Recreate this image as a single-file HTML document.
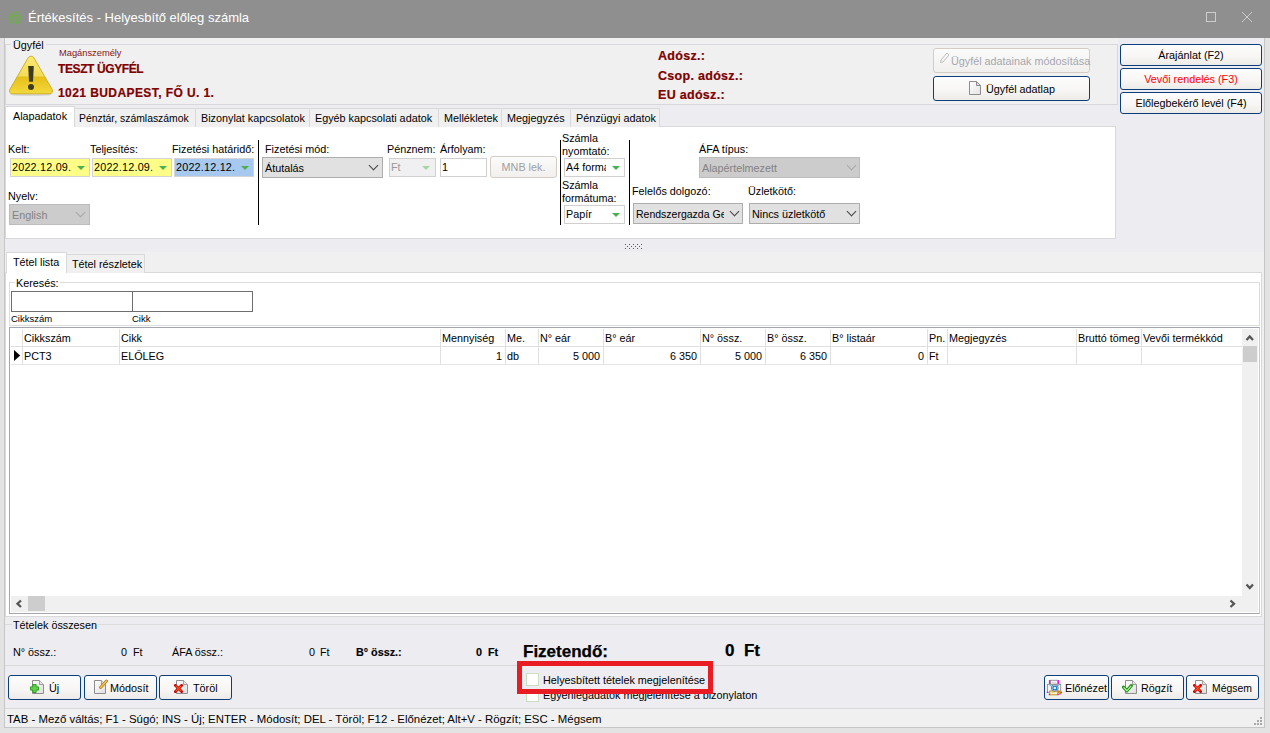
<!DOCTYPE html>
<html><head><meta charset="utf-8">
<style>
*{box-sizing:border-box;margin:0;padding:0}
html,body{width:1270px;height:733px;overflow:hidden;background:#f0f0f0;font-family:"Liberation Sans",sans-serif;font-size:10.8px;color:#000}
.a{position:absolute}
.t{position:absolute;white-space:nowrap;line-height:14px}
.btn{position:absolute;border:1px solid #0b3f7c;border-radius:3px;background:linear-gradient(#fdfdfd,#f7f6f4 60%,#ecebe8);text-align:center;white-space:nowrap}
.dbtn{position:absolute;border:1px solid #d5cdc3;border-radius:3px;background:linear-gradient(#fbfbfb,#f1f0ee);color:#a0a0a0;white-space:nowrap}
.tab{position:absolute;border:1px solid #d9d9d9;border-bottom:none;background:#f0f0f0;white-space:nowrap;line-height:17px;padding-top:1px;padding-left:5px}
.combo{position:absolute;border:1px solid #adadad;background:#e1e1e1;white-space:nowrap;line-height:18px;padding-top:1px;padding-left:2px;overflow:hidden}
.vline{position:absolute;width:1px;background:#000}
.dd{position:absolute;width:0;height:0;border-left:4px solid transparent;border-right:4px solid transparent;border-top:4px solid #4caf50}
.chev{position:absolute;width:7px;height:7px;border-right:1px solid #444;border-bottom:1px solid #444;transform:rotate(45deg)}
.hl{position:absolute;height:1px;background:#d5d5d5}
.vl{position:absolute;width:1px;background:#d5d5d5}
</style></head><body>

<!-- title bar -->
<div class="a" style="left:0;top:0;width:1270px;height:38px;background:#8f8f8f"></div>
<svg class="a" style="left:4px;top:6px" width="24" height="24" viewBox="0 0 24 24">
 <g fill="#6cb240"><circle cx="9.5" cy="6.4" r="1.1"/><circle cx="12.6" cy="6.4" r="1.1"/><circle cx="5.1" cy="13.6" r="1.1"/><circle cx="6.6" cy="16.2" r="1"/><circle cx="17" cy="13.6" r="1.1"/><circle cx="15.4" cy="16.2" r="1"/></g>
 <g fill="none" stroke="#6cb240" stroke-width="1.5" stroke-linecap="round"><path d="M6.6 8.2 Q11.1 12 15.7 8"/><path d="M4.9 10.5 Q9.5 11.5 9.5 14.5 V17.4"/><path d="M17 10.5 Q12.5 11.5 12.5 14.5 V17.4"/></g>
</svg>
<div class="t" style="left:28px;top:10px;font-size:13px;line-height:16px;color:#fff">Értékesítés - Helyesbítő előleg számla</div>
<div class="a" style="left:1206px;top:12px;width:10px;height:10px;border:1px solid #cdcdcd"></div>
<svg class="a" style="left:1241px;top:11px" width="12" height="12" viewBox="0 0 12 12"><path d="M1 1L11 11M11 1L1 11" stroke="#cdcdcd" stroke-width="1"/></svg>

<!-- window frame -->
<div class="a" style="left:0;top:38px;width:4px;height:695px;background:#e3e3e3"></div>
<div class="a" style="left:4px;top:38px;width:1px;height:690px;background:#c6c6c6"></div>
<div class="a" style="left:1265px;top:38px;width:5px;height:695px;background:#e3e3e3"></div>
<div class="a" style="left:1264px;top:38px;width:1px;height:690px;background:#c6c6c6"></div>
<div class="a" style="left:0;top:728px;width:1270px;height:5px;background:#e3e3e3"></div>
<div class="a" style="left:4px;top:727px;width:1261px;height:1px;background:#c6c6c6"></div>

<!-- header area bg -->
<div class="a" style="left:5px;top:38px;width:1259px;height:214px;background:#ececf1"></div>
<div class="a" style="left:5px;top:38px;width:1113px;height:67px;background:#f0f0f0"></div>


<!-- Ugyfel groupbox -->
<div class="a" style="left:5px;top:44px;width:1113px;height:61px;border:1px solid #d8d8dc"></div>
<div class="t" style="left:11px;top:39px;line-height:13px;padding:0 2px;background:#f0f0f0">Ügyfél</div>
<svg class="a" style="left:8px;top:54px" width="46" height="43" viewBox="0 0 46 43">
 <defs><linearGradient id="wg" x1="0" y1="0" x2="0" y2="1"><stop offset="0" stop-color="#fbe970"/><stop offset="0.52" stop-color="#f3db5c"/><stop offset="0.56" stop-color="#e6c01a"/><stop offset="1" stop-color="#f3d93c"/></linearGradient></defs>
 <ellipse cx="23" cy="40.5" rx="21" ry="1.6" fill="#000" opacity="0.10"/>
 <path d="M23 2.2 C21.4 2.2 20.4 3.2 19.4 5 L1.8 35.5 C0.8 37.4 1.8 39.8 4.6 39.8 L41.4 39.8 C44.2 39.8 45.2 37.4 44.2 35.5 L26.6 5 C25.6 3.2 24.6 2.2 23 2.2Z" fill="url(#wg)" stroke="#cdab18" stroke-width="0.9"/>
 <path d="M20.2 12 L25.8 12 L25 27.7 L21 27.7Z" fill="#3e3a1c"/>
 <circle cx="23" cy="32.9" r="3" fill="#3e3a1c"/>
</svg>
<div class="t" style="left:59px;top:46px;font-size:9.3px;color:#861414">Magánszemély</div>
<div class="t" style="left:58px;top:62px;font-size:12px;font-weight:bold;color:#800000;letter-spacing:-0.4px;-webkit-text-stroke:0.2px #800000">TESZT ÜGYFÉL</div>
<div class="t" style="left:58px;top:86px;font-size:12px;font-weight:bold;color:#800000;letter-spacing:0.42px;-webkit-text-stroke:0.2px #800000">1021 BUDAPEST, FŐ U. 1.</div>
<div class="t" style="left:658px;top:49px;font-size:12.5px;font-weight:bold;color:#800000;letter-spacing:0.3px;-webkit-text-stroke:0.2px #800000">Adósz.:</div>
<div class="t" style="left:658px;top:69px;font-size:12.5px;font-weight:bold;color:#800000;letter-spacing:0.3px;-webkit-text-stroke:0.2px #800000">Csop. adósz.:</div>
<div class="t" style="left:658px;top:88px;font-size:12.5px;font-weight:bold;color:#800000;letter-spacing:0.3px;-webkit-text-stroke:0.2px #800000">EU adósz.:</div>

<div class="dbtn" style="left:933px;top:48px;width:157px;height:25px;line-height:24px;padding-left:17px;color:#a6a6ae">Ügyfél adatainak módosítása</div>
<svg class="a" style="left:939px;top:51px" width="11" height="12" viewBox="0 0 11 12"><path d="M2 9 L8 2 L10 4 L4 11 L1.5 11.5Z" fill="none" stroke="#bdbdbd" stroke-width="1"/></svg>
<div class="btn" style="left:933px;top:76px;width:157px;height:25px;line-height:24px;padding-left:18px">Ügyfél adatlap</div>
<svg class="a" style="left:969px;top:81px" width="12" height="14" viewBox="0 0 12 14"><defs><linearGradient id="dga" x1="0" y1="0" x2="1" y2="1"><stop offset="0" stop-color="#ffffff"/><stop offset="1" stop-color="#e2e2e2"/></linearGradient></defs><path d="M0.5 0.5 H7.5 L11.5 4.5 V13.5 H0.5Z" fill="url(#dga)" stroke="#8e8a8e"/><path d="M7.5 0.5 V4.5 H11.5Z" fill="#e4e4e4" stroke="#8e8a8e" stroke-linejoin="miter"/></svg>

<div class="btn" style="left:1120px;top:44px;width:142px;height:22px;line-height:20px">Árajánlat (F2)</div>
<div class="btn" style="left:1120px;top:68px;width:142px;height:22px;line-height:20px;color:#ff0000">Vevői rendelés (F3)</div>
<div class="btn" style="left:1120px;top:92px;width:142px;height:22px;line-height:20px">Előlegbekérő levél (F4)</div>

<!-- upper tabs -->
<div class="a" style="left:5px;top:126px;width:1111px;height:113px;background:#fff;border:1px solid #d9d9d9"></div>
<div class="tab" style="left:74px;top:108px;width:122px;height:19px;font-size:10.4px;padding-left:4px">Pénztár, számlaszámok</div>
<div class="tab" style="left:195px;top:108px;width:115px;height:19px">Bizonylat kapcsolatok</div>
<div class="tab" style="left:309px;top:108px;width:130px;height:19px">Egyéb kapcsolati adatok</div>
<div class="tab" style="left:438px;top:108px;width:64px;height:19px">Mellékletek</div>
<div class="tab" style="left:501px;top:108px;width:70px;height:19px">Megjegyzés</div>
<div class="tab" style="left:570px;top:108px;width:90px;height:19px">Pénzügyi adatok</div>
<div class="tab" style="left:5px;top:106px;width:70px;height:21px;background:#fff;line-height:19px;padding-top:0;padding-left:7px">Alapadatok</div>


<!-- form -->
<div class="t" style="left:8px;top:142px">Kelt:</div>
<div class="t" style="left:90px;top:142px">Teljesítés:</div>
<div class="t" style="left:172px;top:142px">Fizetési határidő:</div>
<div class="a" style="left:10px;top:158px;width:80px;height:19px;background:#ffff88;border:1px solid #d4d4d4"></div>
<div class="t" style="left:12px;top:160px;letter-spacing:0.2px">2022.12.09.</div>
<div class="dd" style="left:77px;top:166px"></div>
<div class="a" style="left:92px;top:158px;width:80px;height:19px;background:#ffff88;border:1px solid #d4d4d4"></div>
<div class="t" style="left:94px;top:160px;letter-spacing:0.2px">2022.12.09.</div>
<div class="dd" style="left:159px;top:166px"></div>
<div class="a" style="left:174px;top:158px;width:80px;height:19px;background:#a7c9ef;border:1px solid #d4d4d4"></div>
<div class="t" style="left:176px;top:160px;letter-spacing:0.2px">2022.12.12.</div>
<div class="dd" style="left:241px;top:166px"></div>
<div class="t" style="left:8px;top:189px">Nyelv:</div>
<div class="combo" style="left:9px;top:204px;width:81px;height:21px;background:#cccccc;border-color:#bcbcbc;color:#838383">English</div>
<div class="chev" style="left:77px;top:209px;border-color:#a8a8a8"></div>
<div class="vline" style="left:258px;top:140px;height:85px"></div>

<div class="t" style="left:265px;top:142px">Fizetési mód:</div>
<div class="combo" style="left:262px;top:157px;width:121px;height:21px">Átutalás</div>
<div class="chev" style="left:370px;top:162px"></div>
<div class="t" style="left:387px;top:142px">Pénznem:</div>
<div class="a" style="left:389px;top:158px;width:47px;height:19px;background:#f0f0f0;border:1px solid #d0d0d0"></div>
<div class="t" style="left:391px;top:160px;color:#9a9a9a">Ft</div>
<div class="dd" style="left:422px;top:166px;border-top-color:#a5d6a7"></div>
<div class="t" style="left:440px;top:142px">Árfolyam:</div>
<div class="a" style="left:440px;top:158px;width:47px;height:19px;background:#fff;border:1px solid #d0d0d0"></div>
<div class="t" style="left:442px;top:160px">1</div>
<div class="dbtn" style="left:490px;top:156px;width:67px;height:22px;line-height:20px;text-align:center">MNB lek.</div>
<div class="vline" style="left:560px;top:140px;height:85px"></div>

<div class="t" style="left:562px;top:131px">Számla</div>
<div class="t" style="left:562px;top:144px">nyomtató:</div>
<div class="a" style="left:564px;top:158px;width:61px;height:19px;background:#fff;border:1px solid #d0d0d0"></div>
<div class="t" style="left:566px;top:160px;width:40px;overflow:hidden">A4 formátum</div>
<div class="dd" style="left:612px;top:166px"></div>
<div class="t" style="left:562px;top:178px">Számla</div>
<div class="t" style="left:562px;top:191px">formátuma:</div>
<div class="a" style="left:564px;top:205px;width:61px;height:19px;background:#fff;border:1px solid #d0d0d0"></div>
<div class="t" style="left:566px;top:207px">Papír</div>
<div class="dd" style="left:612px;top:213px"></div>
<div class="vline" style="left:629px;top:140px;height:85px"></div>

<div class="t" style="left:699px;top:142px">ÁFA típus:</div>
<div class="combo" style="left:699px;top:157px;width:161px;height:21px;background:#cccccc;border-color:#bcbcbc;color:#838383">Alapértelmezett</div>
<div class="chev" style="left:848px;top:162px;border-color:#a8a8a8"></div>
<div class="t" style="left:632px;top:184px">Felelős dolgozó:</div>
<div class="combo" style="left:633px;top:203px;width:110px;height:21px"><span style="display:inline-block;width:88px;overflow:hidden;vertical-align:top;font-size:10.5px">Rendszergazda Gergely</span></div>
<div class="chev" style="left:731px;top:208px"></div>
<div class="t" style="left:748px;top:184px">Üzletkötő:</div>
<div class="combo" style="left:749px;top:203px;width:111px;height:21px">Nincs üzletkötő</div>
<div class="chev" style="left:848px;top:208px"></div>

<!-- splitter dots -->
<svg class="a" style="left:625px;top:244px" width="17" height="5" viewBox="0 0 17 5"><g fill="#5a5a5a"><rect x="0" y="0" width="1" height="1"/><rect x="0" y="4" width="1" height="1"/><rect x="4" y="0" width="1" height="1"/><rect x="4" y="4" width="1" height="1"/><rect x="8" y="0" width="1" height="1"/><rect x="8" y="4" width="1" height="1"/><rect x="12" y="0" width="1" height="1"/><rect x="12" y="4" width="1" height="1"/><rect x="16" y="0" width="1" height="1"/><rect x="16" y="4" width="1" height="1"/><rect x="2" y="2" width="1" height="1"/><rect x="6" y="2" width="1" height="1"/><rect x="10" y="2" width="1" height="1"/><rect x="14" y="2" width="1" height="1"/></g></svg>


<!-- lower tabs -->
<div class="a" style="left:5px;top:272px;width:1257px;height:345px;background:#fff;border:1px solid #d9d9d9"></div>
<div class="tab" style="left:66px;top:254px;width:79px;height:19px">Tétel részletek</div>
<div class="tab" style="left:6px;top:252px;width:61px;height:21px;background:#fff;line-height:19px;padding-top:0;padding-left:6px">Tétel lista</div>

<!-- Keresés -->
<div class="a" style="left:9px;top:282px;width:1251px;height:44px;border:1px solid #dcdcdc"></div>
<div class="t" style="left:15px;top:276px;padding:0 1px;background:#fff">Keresés:</div>
<div class="a" style="left:11px;top:291px;width:122px;height:21px;border:1px solid #6e6e6e"></div>
<div class="a" style="left:132px;top:291px;width:121px;height:21px;border:1px solid #6e6e6e"></div>
<div class="t" style="left:11px;top:312px;font-size:9.5px">Cikkszám</div>
<div class="t" style="left:132px;top:312px;font-size:9.5px">Cikk</div>

<!-- grid -->
<div class="a" style="left:9px;top:327px;width:1251px;height:287px;border:1px solid #a3a6ae;border-right-color:#c8cad0"></div>


<!-- grid contents -->
<div class="hl" style="left:11px;top:346px;width:1231px;background:#dedede"></div>
<div class="hl" style="left:11px;top:364px;width:1231px;background:#e6e6e6"></div>
<div class="vl" style="left:22px;top:329px;height:36px;background:#e0e0e0"></div>
<div class="t" style="left:24px;top:331px;width:94px;overflow:hidden">Cikkszám</div>
<div class="t" style="left:24px;top:349px">PCT3</div>
<div class="vl" style="left:119px;top:329px;height:36px;background:#e0e0e0"></div>
<div class="t" style="left:121px;top:331px;width:318px;overflow:hidden">Cikk</div>
<div class="t" style="left:121px;top:349px">ELŐLEG</div>
<div class="vl" style="left:440px;top:329px;height:36px;background:#e0e0e0"></div>
<div class="t" style="left:442px;top:331px;width:62px;overflow:hidden">Mennyiség</div>
<div class="t" style="left:441px;top:349px;width:61px;text-align:right">1</div>
<div class="vl" style="left:505px;top:329px;height:36px;background:#e0e0e0"></div>
<div class="t" style="left:507px;top:331px;width:30px;overflow:hidden">Me.</div>
<div class="t" style="left:507px;top:349px">db</div>
<div class="vl" style="left:538px;top:329px;height:36px;background:#e0e0e0"></div>
<div class="t" style="left:540px;top:331px;width:62px;overflow:hidden">N° eár</div>
<div class="t" style="left:539px;top:349px;width:61px;text-align:right">5 000</div>
<div class="vl" style="left:603px;top:329px;height:36px;background:#e0e0e0"></div>
<div class="t" style="left:605px;top:331px;width:94px;overflow:hidden">B° eár</div>
<div class="t" style="left:604px;top:349px;width:93px;text-align:right">6 350</div>
<div class="vl" style="left:700px;top:329px;height:36px;background:#e0e0e0"></div>
<div class="t" style="left:702px;top:331px;width:62px;overflow:hidden">N° össz.</div>
<div class="t" style="left:701px;top:349px;width:61px;text-align:right">5 000</div>
<div class="vl" style="left:765px;top:329px;height:36px;background:#e0e0e0"></div>
<div class="t" style="left:767px;top:331px;width:62px;overflow:hidden">B° össz.</div>
<div class="t" style="left:766px;top:349px;width:61px;text-align:right">6 350</div>
<div class="vl" style="left:830px;top:329px;height:36px;background:#e0e0e0"></div>
<div class="t" style="left:832px;top:331px;width:94px;overflow:hidden">B° listaár</div>
<div class="t" style="left:831px;top:349px;width:93px;text-align:right">0</div>
<div class="vl" style="left:927px;top:329px;height:36px;background:#e0e0e0"></div>
<div class="t" style="left:929px;top:331px;width:17px;overflow:hidden">Pn.</div>
<div class="t" style="left:929px;top:349px">Ft</div>
<div class="vl" style="left:947px;top:329px;height:36px;background:#e0e0e0"></div>
<div class="t" style="left:949px;top:331px;width:126px;overflow:hidden">Megjegyzés</div>
<div class="vl" style="left:1076px;top:329px;height:36px;background:#e0e0e0"></div>
<div class="t" style="left:1078px;top:331px;width:62px;overflow:hidden">Bruttó tömeg</div>
<div class="vl" style="left:1141px;top:329px;height:36px;background:#e0e0e0"></div>
<div class="t" style="left:1143px;top:331px;width:98px;overflow:hidden">Vevői termékkód</div>
<svg class="a" style="left:13px;top:350px" width="8" height="12" viewBox="0 0 8 12"><path d="M1 0 L7.2 5.5 L1 11Z" fill="#000"/></svg>
<div class="a" style="left:1242px;top:329px;width:16px;height:267px;background:#f0f0f0"></div>
<div class="a" style="left:1243px;top:346px;width:14px;height:16px;background:#cdcdcd"></div>
<svg class="a" style="left:1245px;top:334px" width="10" height="8" viewBox="0 0 10 8"><path d="M1.5 6 L4.75 2.5 L8 6" fill="none" stroke="#555" stroke-width="2.3"/></svg>
<svg class="a" style="left:1245px;top:583px" width="10" height="8" viewBox="0 0 10 8"><path d="M1.5 1.5 L4.75 5 L8 1.5" fill="none" stroke="#555" stroke-width="2.3"/></svg>
<!-- horizontal scrollbar -->
<div class="a" style="left:11px;top:596px;width:1231px;height:16px;background:#f0f0f0"></div>
<div class="a" style="left:28px;top:596px;width:17px;height:15px;background:#cdcdcd"></div>
<svg class="a" style="left:15px;top:599px" width="8" height="10" viewBox="0 0 8 10"><path d="M6 1.5 L2.5 4.75 L6 8" fill="none" stroke="#555" stroke-width="2.3"/></svg>
<svg class="a" style="left:1229px;top:599px" width="8" height="10" viewBox="0 0 8 10"><path d="M1.5 1.5 L5 4.75 L1.5 8" fill="none" stroke="#555" stroke-width="2.3"/></svg>
<div class="a" style="left:1242px;top:596px;width:16px;height:16px;background:#f0f0f0"></div>


<!-- totals / bottom area bg -->
<div class="a" style="left:5px;top:617px;width:1259px;height:109px;background:#ececf1"></div>
<div class="a" style="left:5px;top:624px;width:1259px;height:1px;background:#dcdcdc"></div>
<div class="t" style="left:12px;top:618px;padding:0 1px;background:#ececf1">Tételek összesen</div>
<div class="t" style="left:13px;top:645px">N° össz.:</div>
<div class="t" style="left:121px;top:645px">0</div>
<div class="t" style="left:133px;top:645px">Ft</div>
<div class="t" style="left:172px;top:645px">ÁFA össz.:</div>
<div class="t" style="left:309px;top:645px">0</div>
<div class="t" style="left:320px;top:645px">Ft</div>
<div class="t" style="left:356px;top:645px;font-weight:bold;-webkit-text-stroke:0.15px #000">B° össz.:</div>
<div class="t" style="left:476px;top:645px;font-weight:bold;-webkit-text-stroke:0.15px #000">0</div>
<div class="t" style="left:488px;top:645px;font-weight:bold;-webkit-text-stroke:0.15px #000">Ft</div>
<div class="t" style="left:523px;top:642px;font-size:17px;line-height:20px;font-weight:bold;-webkit-text-stroke:0.25px #000">Fizetendő:</div>
<div class="t" style="left:725px;top:641px;font-size:17px;line-height:20px;font-weight:bold;-webkit-text-stroke:0.25px #000">0&nbsp; Ft</div>
<div class="a" style="left:5px;top:665px;width:1259px;height:1px;background:#d8d8d8"></div>

<!-- checkboxes -->
<div class="a" style="left:526px;top:689px;width:13px;height:13px;border:1px solid #c9dfc0;background:#fff"></div>
<div class="t" style="left:543px;top:688px">Egyenlegadatok megjelenítése a bizonylaton</div>
<div class="a" style="left:517px;top:661px;width:196px;height:33px;border:5px solid #e91c23"></div>
<div class="a" style="left:522px;top:666px;width:186px;height:23px;background:#ececf1"></div>
<div class="a" style="left:526px;top:673px;width:13px;height:13px;border:1px solid #c9dfc0;background:#fff"></div>
<div class="t" style="left:543px;top:673px">Helyesbített tételek megjelenítése</div>

<!-- buttons -->
<div class="btn" style="left:8px;top:675px;width:73px;height:25px"></div>
<div class="btn" style="left:84px;top:675px;width:73px;height:25px"></div>
<div class="btn" style="left:159px;top:675px;width:73px;height:25px"></div>
<div class="btn" style="left:1044px;top:675px;width:65px;height:25px"></div>
<div class="btn" style="left:1111px;top:675px;width:73px;height:25px"></div>
<div class="btn" style="left:1186px;top:675px;width:73px;height:25px"></div>
<svg class="a" style="left:32px;top:680px" width="12" height="14" viewBox="0 0 12 14"><defs><linearGradient id="dg32" x1="0" y1="0" x2="1" y2="1"><stop offset="0" stop-color="#ffffff"/><stop offset="1" stop-color="#dedede"/></linearGradient></defs><path d="M0.5 0.5 H7.5 L11.5 4.5 V13.5 H0.5Z" fill="url(#dg32)" stroke="#8e8e8e"/><path d="M7.5 0.5 V4.5 H11.5" fill="#e4e4e4" stroke="#a0a0a0"/></svg><svg class="a" style="left:30px;top:684px" width="9" height="9" viewBox="0 0 10 10"><path d="M3.2 0.5 H6.8 V3.2 H9.5 V6.8 H6.8 V9.5 H3.2 V6.8 H0.5 V3.2 H3.2Z" fill="#5fd04a" stroke="#1f9a12" stroke-width="1"/></svg><div class="t" style="left:49px;top:681px">Új</div>
<svg class="a" style="left:94px;top:680px" width="12" height="14" viewBox="0 0 12 14"><defs><linearGradient id="dg94" x1="0" y1="0" x2="1" y2="1"><stop offset="0" stop-color="#ffffff"/><stop offset="1" stop-color="#dedede"/></linearGradient></defs><path d="M0.5 0.5 H7.5 L11.5 4.5 V13.5 H0.5Z" fill="url(#dg94)" stroke="#8e8e8e"/><path d="M7.5 0.5 V4.5 H11.5" fill="#e4e4e4" stroke="#a0a0a0"/></svg><svg class="a" style="left:98px;top:679px" width="11" height="11" viewBox="0 0 11 11"><path d="M2.5 8.5 L8.5 2" stroke="#b07a20" stroke-width="3" stroke-linecap="round"/><path d="M2.5 8.5 L8.5 2" stroke="#f5c24c" stroke-width="1.6" stroke-linecap="round"/></svg><div class="t" style="left:110px;top:681px">Módosít</div>
<svg class="a" style="left:176px;top:680px" width="12" height="14" viewBox="0 0 12 14"><defs><linearGradient id="dg176" x1="0" y1="0" x2="1" y2="1"><stop offset="0" stop-color="#ffffff"/><stop offset="1" stop-color="#dedede"/></linearGradient></defs><path d="M0.5 0.5 H7.5 L11.5 4.5 V13.5 H0.5Z" fill="url(#dg176)" stroke="#8e8e8e"/><path d="M7.5 0.5 V4.5 H11.5" fill="#e4e4e4" stroke="#a0a0a0"/></svg><svg class="a" style="left:174px;top:684px" width="9" height="9" viewBox="0 0 9 9"><path d="M1.4 1.4 L7.6 7.6 M7.6 1.4 L1.4 7.6" stroke="#c80a0a" stroke-width="2.8" stroke-linecap="square"/><path d="M1.8 1.8 L7.2 7.2 M7.2 1.8 L1.8 7.2" stroke="#ff5a1e" stroke-width="1.1"/></svg><div class="t" style="left:193px;top:681px">Töröl</div>
<svg class="a" style="left:1044px;top:676px" width="24" height="24" viewBox="0 0 24 24">
<rect x="6.5" y="4.3" width="7.2" height="4" fill="#fafafa" stroke="#909090" stroke-width="0.9"/>
<rect x="8" y="6" width="4" height="0.8" fill="#d0d0d0"/>
<rect x="4.9" y="4.1" width="1.3" height="3.9" fill="#ff00ff"/><rect x="13.8" y="4.1" width="1.3" height="3.9" fill="#ff00ff"/>
<rect x="3.4" y="8.3" width="13.3" height="8" fill="#f4f4f4" stroke="#8c8c8c" stroke-width="0.9"/>
<rect x="5.8" y="15" width="8" height="3.8" fill="#fff4c0" stroke="#b49422" stroke-width="1"/>
<rect x="7.5" y="16.2" width="3" height="0.8" fill="#f0c060"/>
<circle cx="3.4" cy="16.3" r="0.8" fill="#ff00ff"/><circle cx="5.4" cy="18.5" r="0.8" fill="#ff00ff"/><circle cx="14.3" cy="18.5" r="0.8" fill="#ff00ff"/><circle cx="17.4" cy="16.4" r="0.8" fill="#ff00ff"/>
<path d="M5.5 8.5 L8 10.5 M15 8.5 L12.8 10.5" stroke="#6ab8e8" stroke-width="1.2"/>
<circle cx="10.8" cy="12" r="3.4" fill="#fff" stroke="#6a6a6a" stroke-width="0.9"/>
<circle cx="10.8" cy="12" r="1.9" fill="#e8f6ff" stroke="#1a7ad4" stroke-width="1.3"/>
<path d="M14 14.7 L16.8 18" stroke="#d07a00" stroke-width="2.2"/>
<path d="M14 14.7 L16.8 18" stroke="#ffc040" stroke-width="0.8" stroke-dasharray="1 1"/>
</svg><div class="t" style="left:1065px;top:681px">Előnézet</div>
<svg class="a" style="left:1125px;top:680px" width="12" height="14" viewBox="0 0 12 14"><defs><linearGradient id="dg1125" x1="0" y1="0" x2="1" y2="1"><stop offset="0" stop-color="#ffffff"/><stop offset="1" stop-color="#dedede"/></linearGradient></defs><path d="M0.5 0.5 H7.5 L11.5 4.5 V13.5 H0.5Z" fill="url(#dg1125)" stroke="#8e8e8e"/><path d="M7.5 0.5 V4.5 H11.5" fill="#e4e4e4" stroke="#a0a0a0"/></svg><svg class="a" style="left:1122px;top:683px" width="11" height="10" viewBox="0 0 11 10"><path d="M1.5 4.2 L4.9 7.8 L9.2 2.8" fill="none" stroke="#1c8a12" stroke-width="3.2" stroke-linejoin="round" stroke-linecap="round"/><path d="M1.5 4.2 L4.9 7.8 L9.2 2.8" fill="none" stroke="#a4f28c" stroke-width="1.3" stroke-linejoin="round"/></svg><div class="t" style="left:1141px;top:681px">Rögzít</div>
<svg class="a" style="left:1195px;top:680px" width="12" height="14" viewBox="0 0 12 14"><defs><linearGradient id="dg1195" x1="0" y1="0" x2="1" y2="1"><stop offset="0" stop-color="#ffffff"/><stop offset="1" stop-color="#dedede"/></linearGradient></defs><path d="M0.5 0.5 H7.5 L11.5 4.5 V13.5 H0.5Z" fill="url(#dg1195)" stroke="#8e8e8e"/><path d="M7.5 0.5 V4.5 H11.5" fill="#e4e4e4" stroke="#a0a0a0"/></svg><svg class="a" style="left:1193px;top:684px" width="9" height="9" viewBox="0 0 9 9"><path d="M1.4 1.4 L7.6 7.6 M7.6 1.4 L1.4 7.6" stroke="#c80a0a" stroke-width="2.8" stroke-linecap="square"/><path d="M1.8 1.8 L7.2 7.2 M7.2 1.8 L1.8 7.2" stroke="#ff5a1e" stroke-width="1.1"/></svg><div class="t" style="left:1212px;top:681.5px;font-size:10.4px">Mégsem</div>

<!-- status bar -->
<div class="a" style="left:5px;top:708px;width:1259px;height:1px;background:#d8d8d8"></div>
<div class="a" style="left:5px;top:709px;width:1259px;height:18px;background:#f0f0f0"></div>
<div class="t" style="left:7px;top:712px;font-size:11.4px">TAB - Mező váltás; F1 - Súgó; INS - Új; ENTER - Módosít; DEL - Töröl; F12 - Előnézet; Alt+V - Rögzít; ESC - Mégsem</div>

<svg class="a" style="left:1254px;top:717px" width="8" height="8" viewBox="0 0 8 8"><g fill="#a9a9a9"><rect x="6" y="0" width="2" height="2"/><rect x="3" y="3" width="2" height="2"/><rect x="6" y="3" width="2" height="2"/><rect x="0" y="6" width="2" height="2"/><rect x="3" y="6" width="2" height="2"/><rect x="6" y="6" width="2" height="2"/></g></svg>
</body></html>
